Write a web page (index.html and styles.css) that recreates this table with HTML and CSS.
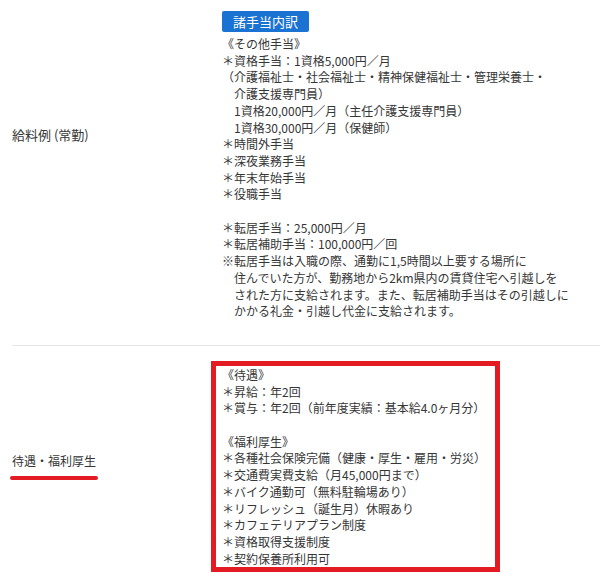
FILE: index.html
```html
<!DOCTYPE html>
<html lang="ja">
<head>
    <meta charset="UTF-8">
    <meta name="viewport" content="width=device-width, initial-scale=1.0">
    <title>募集要項</title>
    <link rel="stylesheet" href="styles.css">
</head>
<body>
    <div class="job-table">
        <!-- 給料例 -->
        <div class="job-row first-row">
            <div class="job-label salary-label">給料例 (常勤)</div>
            <div class="job-value">
                <div class="badge">諸手当内訳</div>
                <p>《その他手当》<br>
                ＊資格手当：1資格5,000円／月<br>
                （介護福祉士・社会福祉士・精神保健福祉士・管理栄養士・<br>
                　介護支援専門員）<br>
                　1資格20,000円／月（主任介護支援専門員）<br>
                　1資格30,000円／月（保健師）<br>
                ＊時間外手当<br>
                ＊深夜業務手当<br>
                ＊年末年始手当<br>
                ＊役職手当</p>
                <p>＊転居手当：25,000円／月<br>
                ＊転居補助手当：100,000円／回<br>
                ※転居手当は入職の際、通勤に1,5時間以上要する場所に<br>
                　住んでいた方が、勤務地から2km県内の賃貸住宅へ引越しを<br>
                　された方に支給されます。また、転居補助手当はその引越しに<br>
                　かかる礼金・引越し代金に支給されます。</p>
            </div>
        </div>

        <!-- 待遇・福利厚生 -->
        <div class="job-row second-row">
            <div class="job-label"><span class="marked-label">待遇・福利厚生</span></div>
            <div class="job-value marked-box">
                <p>《待遇》<br>
                ＊昇給：年2回<br>
                ＊賞与：年2回（前年度実績：基本給4.0ヶ月分）</p>
                <p>《福利厚生》<br>
                ＊各種社会保険完備（健康・厚生・雇用・労災）<br>
                ＊交通費実費支給（月45,000円まで）<br>
                ＊バイク通勤可（無料駐輪場あり）<br>
                ＊リフレッシュ（誕生月）休暇あり<br>
                ＊カフェテリアプラン制度<br>
                ＊資格取得支援制度<br>
                ＊契約保養所利用可</p>
            </div>
        </div>
    </div>
</body>
</html>
```

FILE: styles.css
```css
body {
    margin: 0;
    padding: 0;
    background-color: #fff;
    color: #363636;
    font-family: "Noto Sans CJK JP", "Noto Sans", sans-serif;
    font-size: 12px;
    line-height: 16.7px;
}

p {
    margin: 0;
}

p + p {
    margin-top: 16.7px;
}

/* Table of job details */
.job-table {
    padding-left: 12px;
}

.job-row {
    display: flex;
}

.job-label {
    width: 199px;
    flex-shrink: 0;
    font-size: 13px;
}

.job-value {
    flex: 1;
}

.first-row {
    padding: 11px 0 25px;
    border-bottom: 1px solid #e6e6e6;
}

.first-row .job-value {
    padding-left: 11px;
}

.salary-label {
    padding-top: 116px;
}

.badge {
    display: inline-block;
    margin-bottom: 4px;
    padding: 0 11px;
    background-color: #1a73d3;
    border-radius: 2px;
    color: #fff;
    font-size: 13px;
    line-height: 21px;
}

.second-row {
    padding: 15px 0 16px;
    align-items: center;
}

/* Red marker annotations */
.marked-label {
    display: inline-block;
    vertical-align: top;
    font-size: 12px;
}

.marked-label::after {
    content: "";
    display: block;
    height: 4px;
    margin: 6px -2px 0;
    background-color: #e31b23;
    border-radius: 2px;
}

.marked-box {
    flex: none;
    width: 289px;
    box-sizing: border-box;
    padding: 1px 0 0 6px;
    border: 5px solid #e31b23;
}
```
